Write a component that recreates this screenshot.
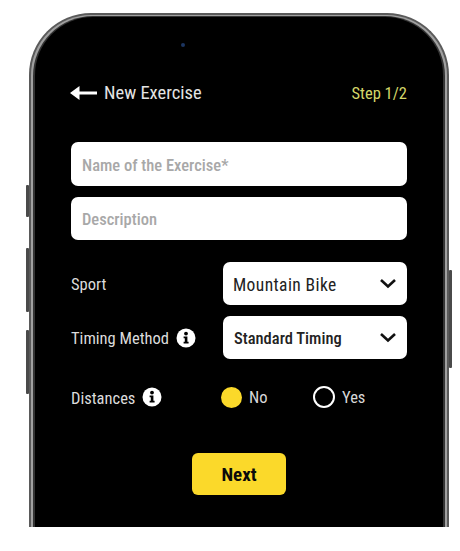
<div class="phone">
    <span class="side s1"></span>
    <span class="side s2"></span>
    <span class="side s3"></span>
    <span class="side s4"></span>

    <div class="bezel">
        <div class="screen">
            <span class="camera"></span>

            <div class="header">
                <div class="title">
                    <svg class="arrow" width="27" height="16" viewBox="0 0 27 16">
                        <path d="M0 8 L9.5 1 V6.6 H27 V9.4 H9.5 V15 Z" fill="#fff" />
                    </svg>
                    <span>New Exercise</span>
                </div>
                <span class="step">Step 1/2</span>
            </div>

            <div class="field">Name of the Exercise*</div>
            <div class="field second">Description</div>

            <div class="row first-row">
                <span class="label">Sport</span>
                <div class="select sport">
                    <span>Mountain Bike</span>
                    <svg width="18" height="11" viewBox="0 0 18 11"><path d="M2 2 L9 8.5 L16 2" /></svg>
                </div>
            </div>

            <div class="row">
                <span class="label">Timing Method
                    <svg class="info" width="20" height="20" viewBox="0 0 20 20">
                        <circle cx="10" cy="10" r="9.5" fill="#fff" />
                        <circle cx="10" cy="5.6" r="1.9" fill="#000" />
                        <path d="M7.6 8.5 H11.4 V13.8 H12.6 V15.6 H7.6 V13.8 H8.8 V10.3 H7.6 Z" fill="#000" />
                    </svg>
                </span>
                <div class="select timing">
                    <span>Standard Timing</span>
                    <svg width="18" height="11" viewBox="0 0 18 11"><path d="M2 2 L9 8.5 L16 2" /></svg>
                </div>
            </div>

            <div class="row radios">
                <span class="label">Distances
                    <svg class="info" width="20" height="20" viewBox="0 0 20 20">
                        <circle cx="10" cy="10" r="9.5" fill="#fff" />
                        <circle cx="10" cy="5.6" r="1.9" fill="#000" />
                        <path d="M7.6 8.5 H11.4 V13.8 H12.6 V15.6 H7.6 V13.8 H8.8 V10.3 H7.6 Z" fill="#000" />
                    </svg>
                </span>
                <div class="options">
                    <div class="option no"><span class="dot on"></span>No</div>
                    <div class="option"><span class="dot"></span>Yes</div>
                </div>
            </div>

            <button class="next">Next</button>
        </div>
    </div>
</div>

<style>
    :global(body) {
        background: #fff;
    }
    .phone {
        position: relative;
        box-sizing: border-box;
        width: 420px;
        height: 514px;
        margin: 13px 0 0 29px;
        padding: 1px 2px 0;
        border: 2px solid #5a5a5a;
        border-bottom: 0;
        border-radius: 62px 62px 0 0;
        background: #a0a0a0;
    }
    .bezel {
        box-sizing: border-box;
        height: 100%;
        padding: 1px 2px 0;
        border-radius: 60px 60px 0 0;
        background: #333;
    }
    .side {
        position: absolute;
        width: 3px;
        background: #4a4a4a;
        border-radius: 1px;
    }
    .s1 { left: -5px; top: 170px; height: 32px; }
    .s2 { left: -5px; top: 233px; height: 64px; }
    .s3 { left: -5px; top: 315px; height: 64px; }
    .s4 { right: -5px; top: 255px; height: 98px; }

    .screen {
        position: relative;
        box-sizing: border-box;
        height: 100%;
        padding: 66px 36px 0;
        border-radius: 58px 58px 0 0;
        background: #000;
        font-family: Roboto, "Liberation Sans", sans-serif;
        font-stretch: 87%;
        color: #e8e8e8;
        display: flex;
        flex-direction: column;
    }
    .camera {
        position: absolute;
        left: 146px;
        top: 26px;
        width: 4px;
        height: 4px;
        border-radius: 50%;
        background: #1c3560;
    }

    .header {
        display: flex;
        justify-content: space-between;
        align-items: center;
        height: 20px;
        margin-left: -1px;
        font-size: 18.5px;
    }
    .title {
        display: flex;
        align-items: center;
        gap: 7px;
        color: #e4e4e4;
    }
    .step {
        font-size: 16.5px;
        color: #d5d86a;
    }

    .field {
        box-sizing: border-box;
        height: 44px;
        margin-top: 39px;
        padding: 2px 0 0 11px;
        display: flex;
        align-items: center;
        background: #fff;
        border-radius: 7px;
        color: #a8a8a8;
        font-size: 16.5px;
        font-weight: 500;
    }
    .second {
        margin-top: 11px;
        height: 43px;
    }

    .row {
        display: flex;
        justify-content: space-between;
        align-items: center;
        height: 43px;
        margin-top: 11px;
    }
    .first-row {
        margin-top: 22px;
    }
    .label {
        display: flex;
        align-items: center;
        gap: 7px;
        padding-top: 2px;
        font-size: 16.5px;
        color: #dcdcdc;
    }
    .info {
        margin-bottom: 2px;
    }
    .select {
        box-sizing: border-box;
        width: 184px;
        height: 43px;
        display: flex;
        justify-content: space-between;
        align-items: center;
        padding: 0 10px;
        background: #fff;
        border-radius: 7px;
        color: #222;
    }
    .select span {
        margin-top: 2px;
    }
    .select svg {
        fill: none;
        stroke: #111;
        stroke-width: 2.6;
    }
    .sport {
        font-size: 17.5px;
        letter-spacing: 0.4px;
    }
    .timing {
        font-size: 16.5px;
        font-weight: 500;
        padding-left: 11px;
    }

    .radios {
        margin-top: 26px;
        height: 24px;
    }
    .options {
        width: 186px;
        display: flex;
        align-items: center;
    }
    .option {
        display: flex;
        align-items: center;
        gap: 7px;
        font-size: 16.5px;
        color: #d8d8d8;
    }
    .no {
        width: 92px;
    }
    .dot {
        box-sizing: border-box;
        width: 22px;
        height: 22px;
        border-radius: 50%;
        border: 2px solid #fff;
    }
    .dot.on {
        width: 21px;
        height: 21px;
        background: #fbd92a;
        border: 0;
    }

    .next {
        align-self: center;
        width: 94px;
        height: 42px;
        margin-top: 44px;
        padding-top: 2px;
        border: 0;
        border-radius: 6px;
        background: #fbd92a;
        color: #0a0a0a;
        font-family: Roboto, "Liberation Sans", sans-serif;
        font-stretch: 87%;
        font-size: 19px;
        font-weight: 700;
    }
</style>
